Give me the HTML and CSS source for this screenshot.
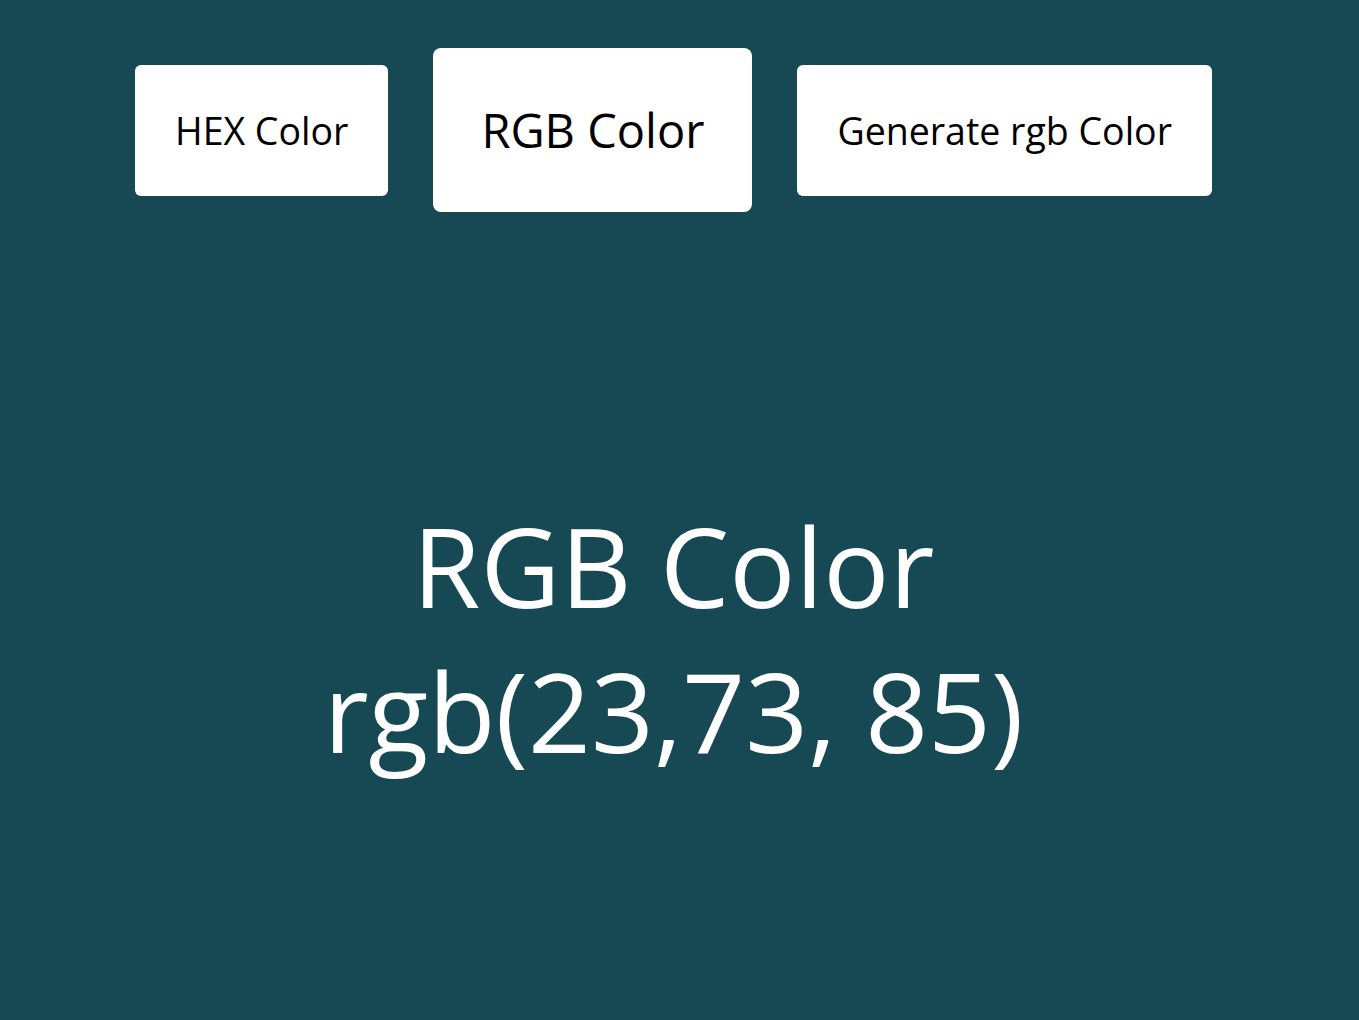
FILE: index.html
```html
<!DOCTYPE html>
<html lang="en">
<head>
<meta charset="utf-8">
<title>RGB Color</title>
<link rel="stylesheet" href="styles.css">
</head>
<body>
<nav class="tabs">
  <button class="tab">HEX Color</button>
  <button class="tab tab-active">RGB Color</button>
  <button class="tab">Generate rgb Color</button>
</nav>
<main class="display">
  <div class="display-title">RGB Color</div>
  <div class="display-value">rgb(23,73, 85)</div>
</main>
</body>
</html>
```

FILE: styles.css
```css
html, body {
  margin: 0;
  padding: 0;
}
body {
  background: #174955;
  font-family: "Open Sans", "Noto Sans", sans-serif;
  min-height: 1020px;
  padding-right: 12px;
  box-sizing: border-box;
}
.tabs {
  display: flex;
  justify-content: center;
  align-items: center;
  gap: 45px;
  padding-top: 48px;
}
.tab {
  font-family: "Open Sans", "Noto Sans", sans-serif;
  font-size: 37.5px;
  font-weight: 500;
  line-height: 51px;
  padding: 40px 40px;
  background: #ffffff;
  color: #000000;
  border: none;
  border-radius: 6px;
  cursor: pointer;
}
.tab-active {
  font-size: 47px;
  line-height: 64px;
  padding: 50px 48px;
  border-radius: 8px;
}
.display {
  margin-top: 281px;
  text-align: center;
  color: #ffffff;
  font-size: 110px;
  line-height: 145px;
}
```
